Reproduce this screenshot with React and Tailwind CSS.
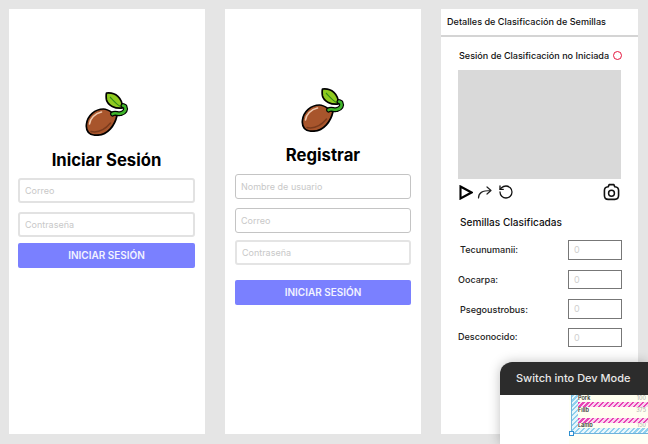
import React from "react";
import { RotateCcw } from "lucide-react";

function Seed({ className }) {
  return (
    <svg viewBox="0 0 44 44" className={className}>
      <path d="M21.5 1 C30.5 0 37.5 6 37.5 16 C30 17 23 13.5 21.5 8 C21 5 21 3 21.5 1 Z" fill="#8fca1f" stroke="#000" strokeWidth="1.7" strokeLinejoin="round" />
      <path d="M25 5 C28 8 31 12 35.5 14.5" fill="none" stroke="#2f8a18" strokeWidth="1.1" />
      <path d="M32 23.5 C30 33 23 43 12 43.2 C4 43.5 0.5 39 1.5 32 C2.5 23.5 10 17 18.5 17 C24 17 27 21.5 32 23.5 Z" fill="#a8552c" stroke="#000" strokeWidth="1.7" strokeLinejoin="round" />
      <path d="M4.5 32 C5 26.5 10 21.5 16.5 20" fill="none" stroke="#f0c9ae" strokeWidth="1.6" strokeLinecap="round" />
      <path d="M6 39.5 C13 41 20 37.5 25.5 31" fill="none" stroke="#7b3b1d" strokeWidth="1.5" strokeLinecap="round" />
      <path d="M27.5 22 C30 20 33 22.5 36 21.5 C40 20.5 41.5 17.5 40 14.5 L38 13.5" fill="none" stroke="#000" strokeWidth="5" strokeLinejoin="round" strokeLinecap="round" />
      <path d="M27.5 22 C30 20 33 22.5 36 21.5 C40 20.5 41.5 17.5 40 14.5 L38 13.5" fill="none" stroke="#3fb52a" strokeWidth="2.6" strokeLinejoin="round" strokeLinecap="round" />
    </svg>
  );
}

function Field({ placeholder, className }) {
  return (
    <input
      readOnly
      placeholder={placeholder}
      className={`h-[25px] w-full rounded-[3px] bg-white px-[5px] text-[9px] outline-none placeholder:text-[#c8c8c8] ${className}`}
    />
  );
}

function SubmitButton() {
  return (
    <button className="flex h-[25px] w-full items-center justify-center rounded-[2px] bg-[#7a80ff] text-[10px] font-semibold text-[#f2f3ff]">
      INICIAR SESIÓN
    </button>
  );
}

function Row({ label, className, inputClass }) {
  return (
    <div className={`-mr-[1px] flex items-start justify-between ${className}`}>
      <span className={`text-[9.05px] font-medium leading-none text-[#222] ${inputClass}`}>{label}</span>
      <div className="flex h-[19.5px] w-[54px] items-center border border-[#777] pl-[5px] text-[9px] text-[#cfcfcf]">0</div>
    </div>
  );
}

function PinkBand() {
  return <div className="h-[5px] bg-[repeating-linear-gradient(135deg,#e845b5_0,#e845b5_1.5px,#fbd3ee_1.5px,#fbd3ee_3.5px)]" />;
}

function MenuRow({ name, value, className }) {
  return (
    <div className={`flex justify-between overflow-hidden bg-[#fffff0] pr-[2px] text-[5.5px] font-semibold leading-[5px] text-[#333] ${className}`}>
      <span>{name}</span>
      <span className="font-normal text-[#aaa]">{value}</span>
    </div>
  );
}

export default function App() {
  return (
    <div className="relative h-[444px] w-[648px] overflow-hidden bg-[#e5e5e5] font-['Inter',sans-serif]">
      <div className="flex gap-5 pl-[9px] pt-[9px]">
        <div className="flex h-[425px] w-[196px] flex-col items-center bg-white pl-[9px] pr-[10px] pt-[83px]">
          <Seed className="h-[44px] w-[44px]" />
          <h1 className="mt-[13px] text-[16.7px] font-bold leading-[22px] text-black">Iniciar Sesión</h1>
          <Field placeholder="Correo" className="mt-[7px] border-2 border-[#e2e2e2]" />
          <Field placeholder="Contraseña" className="mt-[9px] border-2 border-[#e2e2e2]" />
          <div className="mt-[6px] w-full"><SubmitButton /></div>
        </div>

        <div className="flex h-[425px] w-[196px] flex-col items-center bg-white px-[10px] pt-[79px]">
          <Seed className="h-[44px] w-[44px]" />
          <h1 className="mt-[12px] text-[16.7px] font-bold leading-[22px] text-black">Registrar</h1>
          <Field placeholder="Nombre de usuario" className="mt-[8px] border border-[#c4c4c4]" />
          <Field placeholder="Correo" className="mt-[9px] border border-[#c4c4c4]" />
          <Field placeholder="Contraseña" className="mt-[7px] border-2 border-[#e4e4e4]" />
          <div className="mt-[15px] w-full"><SubmitButton /></div>
        </div>

        <div className="flex h-[425px] w-[197px] flex-col bg-white">
          <div className="flex h-[28px] items-center border-b-2 border-[#d4d4d4] pl-[6px] text-[9.1px] font-medium text-[#111]">
            Detalles de Clasificación de Semillas
          </div>
          <div className="flex flex-col px-[17px]">
            <div className="mt-[12px] flex items-center justify-between">
              <span className="ml-[1px] text-[9.05px] font-medium leading-[13px] text-[#111]">Sesión de Clasificación no Iniciada</span>
              <span className="-mr-[1px] h-[9px] w-[9px] rounded-full border-[1.5px] border-[#e5173f]" />
            </div>
            <div className="mt-[8px] h-[109px] w-[163px] bg-[#d9d9d9]" />
            <div className="mt-[4px] flex items-center justify-between pl-[1px] pr-[1px]">
              <div className="flex items-center gap-[4px]">
                <svg viewBox="0 0 14 15" className="h-[15px] w-[14px]">
                  <path d="M1.5 1.5 L12.5 7.5 L1.5 13.5 Z" fill="none" stroke="#000" strokeWidth="2.1" strokeLinejoin="miter" />
                </svg>
                <svg viewBox="0 0 16 15" className="h-[15px] w-[16px]">
                  <path d="M1.5 13 C1.5 8 5 5.5 13.5 5.5 M10 2 L14 5.5 L10 9" fill="none" stroke="#222" strokeWidth="1.2" strokeLinecap="round" strokeLinejoin="round" />
                </svg>
                <RotateCcw size={16} strokeWidth={1.9} color="#111" className="ml-[1px]" />
              </div>
              <svg viewBox="0 0 18 18" className="h-[18px] w-[17px]">
                <path d="M5.5 3.5 L6.5 1.2 H11.5 L12.5 3.5 C15 3.7 16.5 5 16.5 7.5 V12.5 C16.5 15.5 15.3 16.8 12.5 16.8 H5.5 C2.7 16.8 1.5 15.5 1.5 12.5 V7.5 C1.5 5 3 3.7 5.5 3.5 Z" fill="none" stroke="#111" strokeWidth="1.7" strokeLinejoin="round" />
                <circle cx="9" cy="10.3" r="3.1" fill="none" stroke="#111" strokeWidth="1.6" />
              </svg>
            </div>
            <div className="mt-[15px] pl-[2px] text-[10.1px] font-medium leading-[13px] text-[#111]">Semillas Clasificadas</div>
            <Row label="Tecunumanii:" className="mt-[11px]" inputClass="ml-[2px] mt-[5px]" />
            <Row label="Oocarpa:" className="mt-[10px]" inputClass="mt-[5px]" />
            <Row label="Psegoustrobus:" className="mt-[10px]" inputClass="ml-[2px] mt-[6px]" />
            <Row label="Desconocido:" className="mt-[9px]" inputClass="mt-[4px]" />
          </div>
        </div>
      </div>

      <div className="absolute left-[500px] top-[362px] flex h-[82px] w-[148px] flex-col overflow-hidden rounded-tl-[12px] bg-white shadow-[0_0_12px_rgba(0,0,0,0.25)]">
        <div className="flex h-[33px] shrink-0 items-center bg-[#2c2c2c] pl-[16px] text-[11px] font-medium text-[#e8e8e8]">
          Switch into Dev Mode
        </div>
        <div className="ml-[69px] flex-1 bg-[#fffff5] pl-[2px]">
          <div className="relative h-[39px] border-b border-l border-[#6fb3dc] bg-[repeating-linear-gradient(135deg,#8fd0ee_0,#8fd0ee_1.5px,#e8f6fb_1.5px,#e8f6fb_3.5px)] pb-[6px] pl-[6px]">
            <div className="flex h-[33px] flex-col">
              <MenuRow name="Pork" value="100" className="h-[7px] pt-[1px]" />
              <PinkBand />
              <MenuRow name="Fillb" value="375" className="h-[11px] pt-[1px]" />
              <PinkBand />
              <MenuRow name="Lamb" value="150" className="h-[5px]" />
            </div>
            <span className="absolute -bottom-[3px] -left-[3px] h-[5px] w-[5px] border border-[#2f8fd0] bg-white" />
          </div>
        </div>
      </div>
    </div>
  );
}
